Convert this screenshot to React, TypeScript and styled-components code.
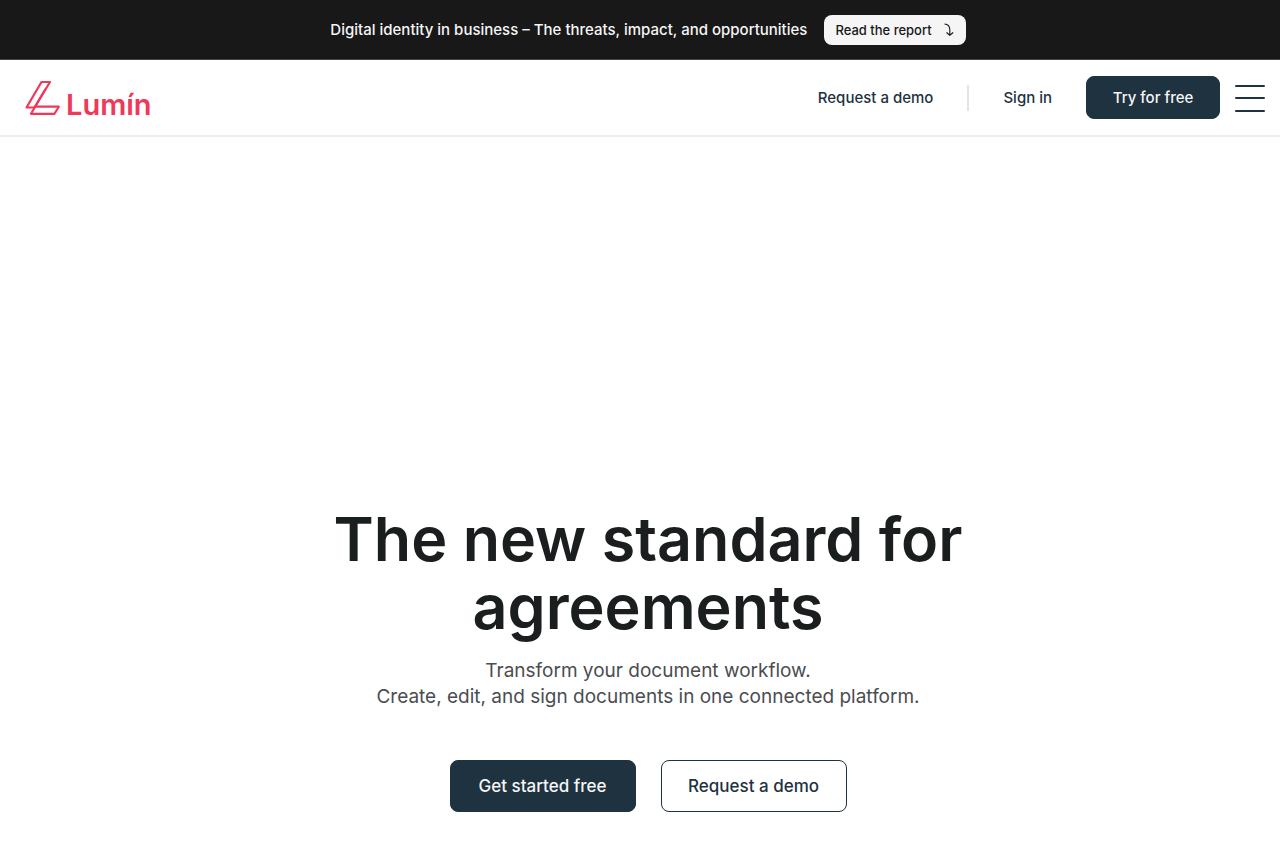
import React from "react";
import styled, { createGlobalStyle, css } from "styled-components";

const colors = {
  ink: "#181818",
  navy: "#1e3240",
  heading: "#1a1e1f",
  body: "#4a4d50",
  brand: "#f0385a",
  line: "#ececee",
};

const GlobalStyle = createGlobalStyle`
  *, *::before, *::after { box-sizing: border-box; }
  body {
    margin: 0;
    background: #fff;
    color: ${colors.navy};
    font-family: Inter, "Liberation Sans", sans-serif;
  }
`;

const Banner = styled.aside`
  display: flex;
  align-items: center;
  justify-content: center;
  gap: 17px;
  min-height: 60px;
  padding: 0 0 0 16px;
  background: ${colors.ink};
  border-bottom: 1px solid #444;
`;

const BannerText = styled.p`
  margin: 0;
  color: #f5f5f5;
  font-size: 15px;
  font-weight: 500;
  line-height: 24px;
`;

const BannerLink = styled.a`
  display: flex;
  align-items: center;
  gap: 12px;
  height: 30px;
  padding: 0 12px 0 11px;
  border-radius: 8px;
  background: #f5f5f5;
  color: ${colors.ink};
  font-size: 13px;
  font-weight: 500;
  text-decoration: none;
`;

const Header = styled.header`
  display: flex;
  align-items: center;
  justify-content: space-between;
  height: 77px;
  padding: 0 15px 0 25px;
  border-bottom: 2px solid ${colors.line};
`;

const Logo = styled.a`
  display: flex;
  align-items: flex-end;
  gap: 5px;
  color: ${colors.brand};
  text-decoration: none;
`;

const Wordmark = styled.span`
  font-size: 29px;
  font-weight: 600;
  line-height: 22px;
`;

const Nav = styled.nav`
  display: flex;
  align-items: center;
`;

const NavLink = styled.a`
  color: ${colors.navy};
  font-size: 15px;
  font-weight: 500;
  line-height: 24px;
  text-decoration: none;
`;

const Divider = styled.span`
  width: 2px;
  height: 26px;
  margin: 0 34px;
  background: #e4e4e8;
`;

const Button = styled.a<{ $outlined?: boolean; $large?: boolean }>`
  display: flex;
  align-items: center;
  justify-content: center;
  border: 1px solid ${colors.navy};
  border-radius: 8px;
  background: ${(p) => (p.$outlined ? "#fff" : colors.navy)};
  color: ${(p) => (p.$outlined ? colors.navy : "#f5f5f5")};
  font-weight: 500;
  text-decoration: none;
  ${(p) =>
    p.$large
      ? css`
          min-width: 186px;
          height: 52px;
          font-size: 17px;
        `
      : css`
          min-width: 134px;
          height: 43px;
          margin-left: 34px;
          font-size: 15px;
        `}
`;

const MenuButton = styled.button`
  display: flex;
  margin-left: 15px;
  padding: 0;
  border: 0;
  background: none;
  color: ${colors.navy};
  cursor: pointer;
`;

const Hero = styled.main`
  display: flex;
  flex-direction: column;
  align-items: center;
  padding: 368px 0 40px 16px;
  text-align: center;
`;

const Title = styled.h1`
  max-width: 720px;
  margin: 0;
  color: ${colors.heading};
  font-size: 61px;
  font-weight: 600;
  line-height: 68px;
`;

const Lead = styled.p`
  margin: 17px 0 0;
  color: ${colors.body};
  font-size: 19px;
  line-height: 26px;
`;

const Actions = styled.div`
  display: flex;
  flex-wrap: wrap;
  justify-content: center;
  gap: 25px;
  margin-top: 50px;
`;

const LogoMark = () => (
  <svg width="36" height="36" viewBox="0 0 36 36" fill="none" stroke="currentColor" strokeWidth="2.2" strokeLinejoin="round" aria-hidden="true">
    <path d="M16.5 2H25L9.5 27.5H1.5Z" />
    <path d="M20.5 9L6 33.8H29.5L33.8 26.7H10" />
  </svg>
);

const ArrowIcon = () => (
  <svg width="10" height="14" viewBox="0 0 10 14" fill="none" stroke="currentColor" strokeWidth="1.1" aria-hidden="true">
    <path d="M.5 1C4.5 1.3 5.8 3.5 5.8 7V12M2.5 9.5L5.8 12.2L9.2 9.5" />
  </svg>
);

const MenuIcon = () => (
  <svg width="30" height="28" viewBox="0 0 30 28" stroke="currentColor" strokeWidth="2" strokeLinecap="round" aria-hidden="true">
    <path d="M1 2H29M1 14H29M1 27H29" />
  </svg>
);

export default function App() {
  return (
    <>
      <GlobalStyle />
      <Banner>
        <BannerText>Digital identity in business – The threats, impact, and opportunities</BannerText>
        <BannerLink href="#report">
          Read the report
          <ArrowIcon />
        </BannerLink>
      </Banner>
      <Header>
        <Logo href="#home">
          <LogoMark />
          <Wordmark>Lumín</Wordmark>
        </Logo>
        <Nav>
          <NavLink href="#demo">Request a demo</NavLink>
          <Divider />
          <NavLink href="#signin">Sign in</NavLink>
          <Button href="#try">Try for free</Button>
          <MenuButton type="button" aria-label="Open menu">
            <MenuIcon />
          </MenuButton>
        </Nav>
      </Header>
      <Hero>
        <Title>The new standard for agreements</Title>
        <Lead>
          Transform your document workflow.
          <br />
          Create, edit, and sign documents in one connected platform.
        </Lead>
        <Actions>
          <Button $large href="#start">Get started free</Button>
          <Button $large $outlined href="#demo">Request a demo</Button>
        </Actions>
      </Hero>
    </>
  );
}
